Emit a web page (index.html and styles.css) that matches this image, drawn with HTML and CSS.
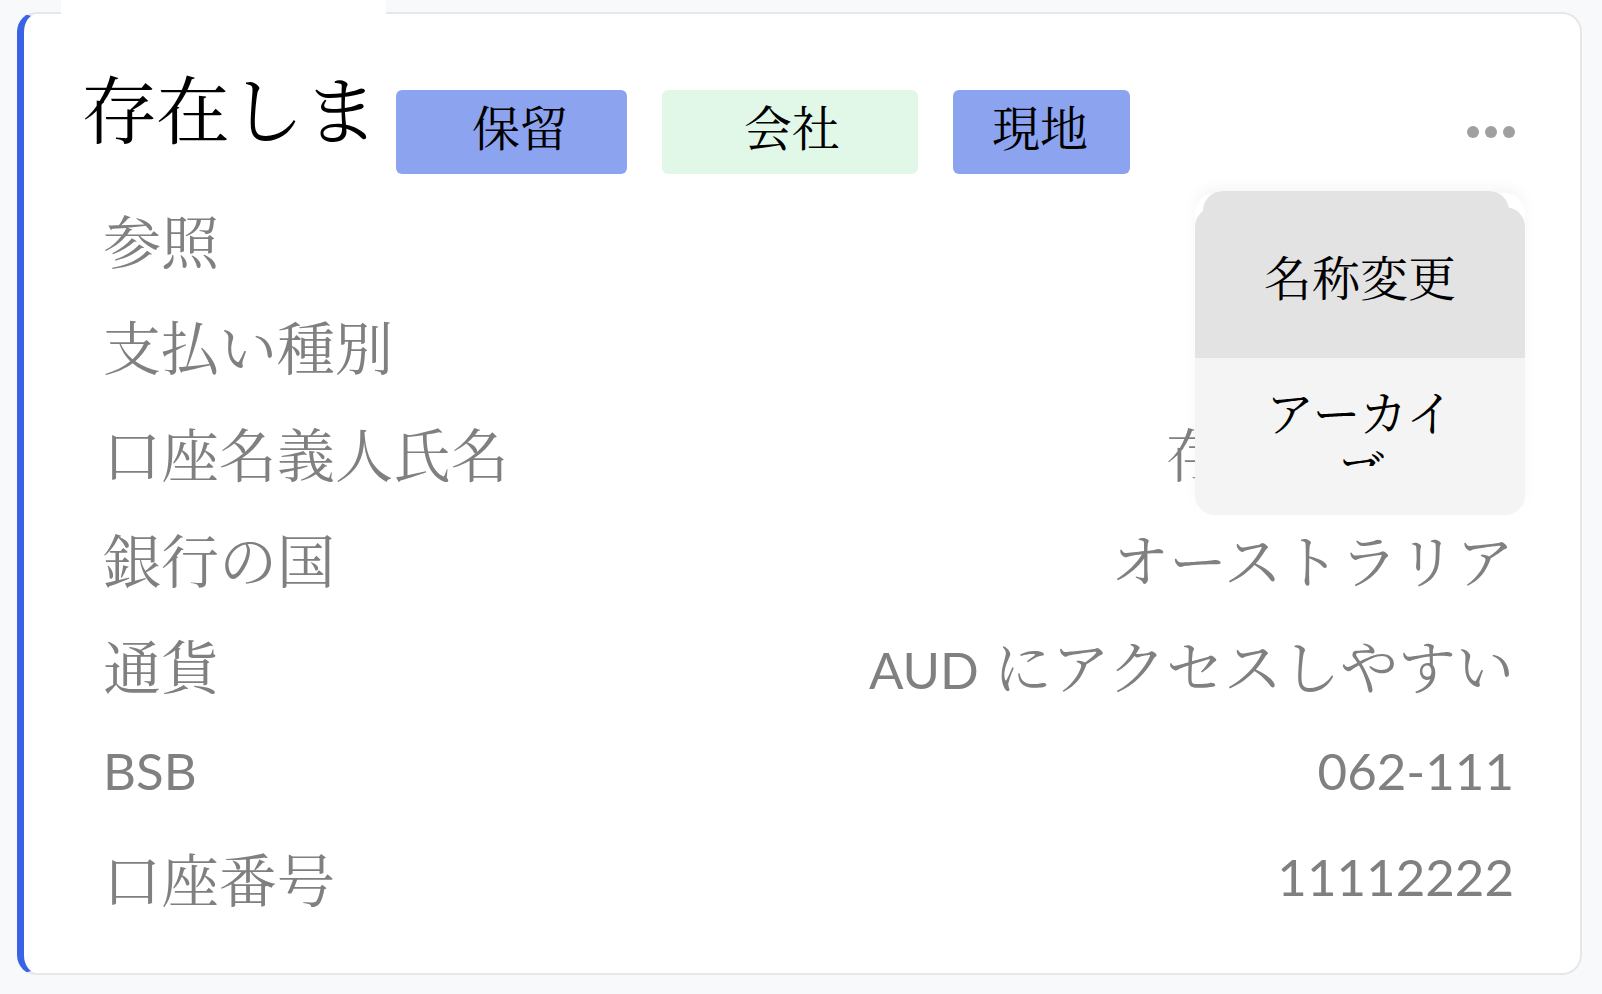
FILE: index.html
```html
<!DOCTYPE html>
<html lang="ja">
<head>
<meta charset="utf-8">
<title>口座</title>
<link rel="stylesheet" href="styles.css">
</head>
<body>
<div class="card">
  <div class="header">
    <h1 class="title">存在しま</h1>
    <span class="tag tag-blue tag-hold">保留</span>
    <span class="tag tag-green tag-company">会社</span>
    <span class="tag tag-blue tag-local">現地</span>
    <span class="spacer"></span>
    <span class="dots"><i></i><i></i><i></i></span>
  </div>
  <div class="row"><span class="label">参照</span><span class="value"></span></div>
  <div class="row"><span class="label">支払い種別</span><span class="value"></span></div>
  <div class="row"><span class="label">口座名義人氏名</span><span class="value">存在しません</span></div>
  <div class="row"><span class="label">銀行の国</span><span class="value">オーストラリア</span></div>
  <div class="row"><span class="label">通貨</span><span class="value"><span class="latin">AUD</span> にアクセスしやすい</span></div>
  <div class="row"><span class="label latin">BSB</span><span class="value latin">062-111</span></div>
  <div class="row"><span class="label">口座番号</span><span class="value latin">11112222</span></div>

  <div class="menu">
    <div class="menu-item menu-item-active"><span class="menu-text">名称変更</span></div>
    <div class="menu-item"><span class="menu-text menu-text-clip">アーカイブ</span></div>
  </div>
</div>
</body>
</html>
```

FILE: styles.css
```css
html, body {
  margin: 0;
  padding: 0;
}
body {
  background: #f8f9fb;
  width: 1602px;
  height: 994px;
  overflow: hidden;
  font-family: "Noto Serif CJK JP", "Noto Sans CJK JP", serif;
}
.card {
  position: relative;
  box-sizing: border-box;
  margin: 12px 0 0 17px;
  width: 1565px;
  height: 963px;
  background: #ffffff;
  border: 2px solid #e6e7e9;
  border-left: 7px solid #3a62e6;
  border-radius: 20px;
  padding: 0 66px 0 79px;
}
.header {
  display: flex;
  align-items: flex-start;
  height: 172px;
}
.title {
  margin: -14px 0 0 -42px;
  padding: 56px 8px 0 21px;
  background: #ffffff;
  font-size: 74px;
  line-height: 100px;
  font-weight: 400;
  color: #000000;
  white-space: nowrap;
  height: 127px;
}
.tag {
  margin-top: 76px;
  height: 84px;
  box-sizing: border-box;
  border-radius: 6px;
  font-size: 48px;
  line-height: 72px;
  padding-bottom: 12px;
  color: #000;
  white-space: nowrap;
}
.tag-blue { background: #8ca4f0; }
.tag-green { background: #e1f8e9; }
.tag-hold { margin-left: 10px; padding-left: 76px; padding-right: 59px; }
.tag-company { margin-left: 35px; padding-left: 82px; padding-right: 78px; }
.tag-local { margin-left: 35px; padding-left: 39px; padding-right: 42px; }
.spacer { flex: 1; }
.dots {
  display: flex;
  gap: 6px;
  margin-top: 112px;
  margin-right: -1px;
}
.dots i {
  width: 12px;
  height: 12px;
  border-radius: 50%;
  background: #a0a0a0;
  filter: blur(0.7px);
}
.row {
  display: flex;
  justify-content: space-between;
  align-items: center;
  height: 106.3px;
  font-size: 58px;
  color: #808080;
  white-space: nowrap;
}
.latin {
  font-family: "Lato", "Open Sans", sans-serif;
  font-size: 51px;
}
.menu {
  position: absolute;
  left: 1171px;
  top: 179px;
  width: 330px;
  border-radius: 20px;
  box-shadow: 0 -6px 14px rgba(0, 0, 0, 0.04);
  color: #000;
  font-size: 48px;
  text-align: center;
}
.menu::before {
  content: "";
  position: absolute;
  left: 8px;
  right: 16px;
  top: -2px;
  height: 40px;
  border-radius: 20px;
  background: #e3e3e3;
}
.menu-item {
  position: relative;
  background: #f4f4f4;
  padding: 23px 55px 49px;
  border-radius: 0 0 20px 20px;
}
.menu-item-active {
  background: #e3e3e3;
  padding: 39px 55px 53px;
  border-radius: 20px 20px 0 0;
  margin-top: 14px;
}
.menu-text {
  display: block;
  line-height: 59px;
}
.menu-text-clip {
  height: 85px;
  overflow: hidden;
}
```
